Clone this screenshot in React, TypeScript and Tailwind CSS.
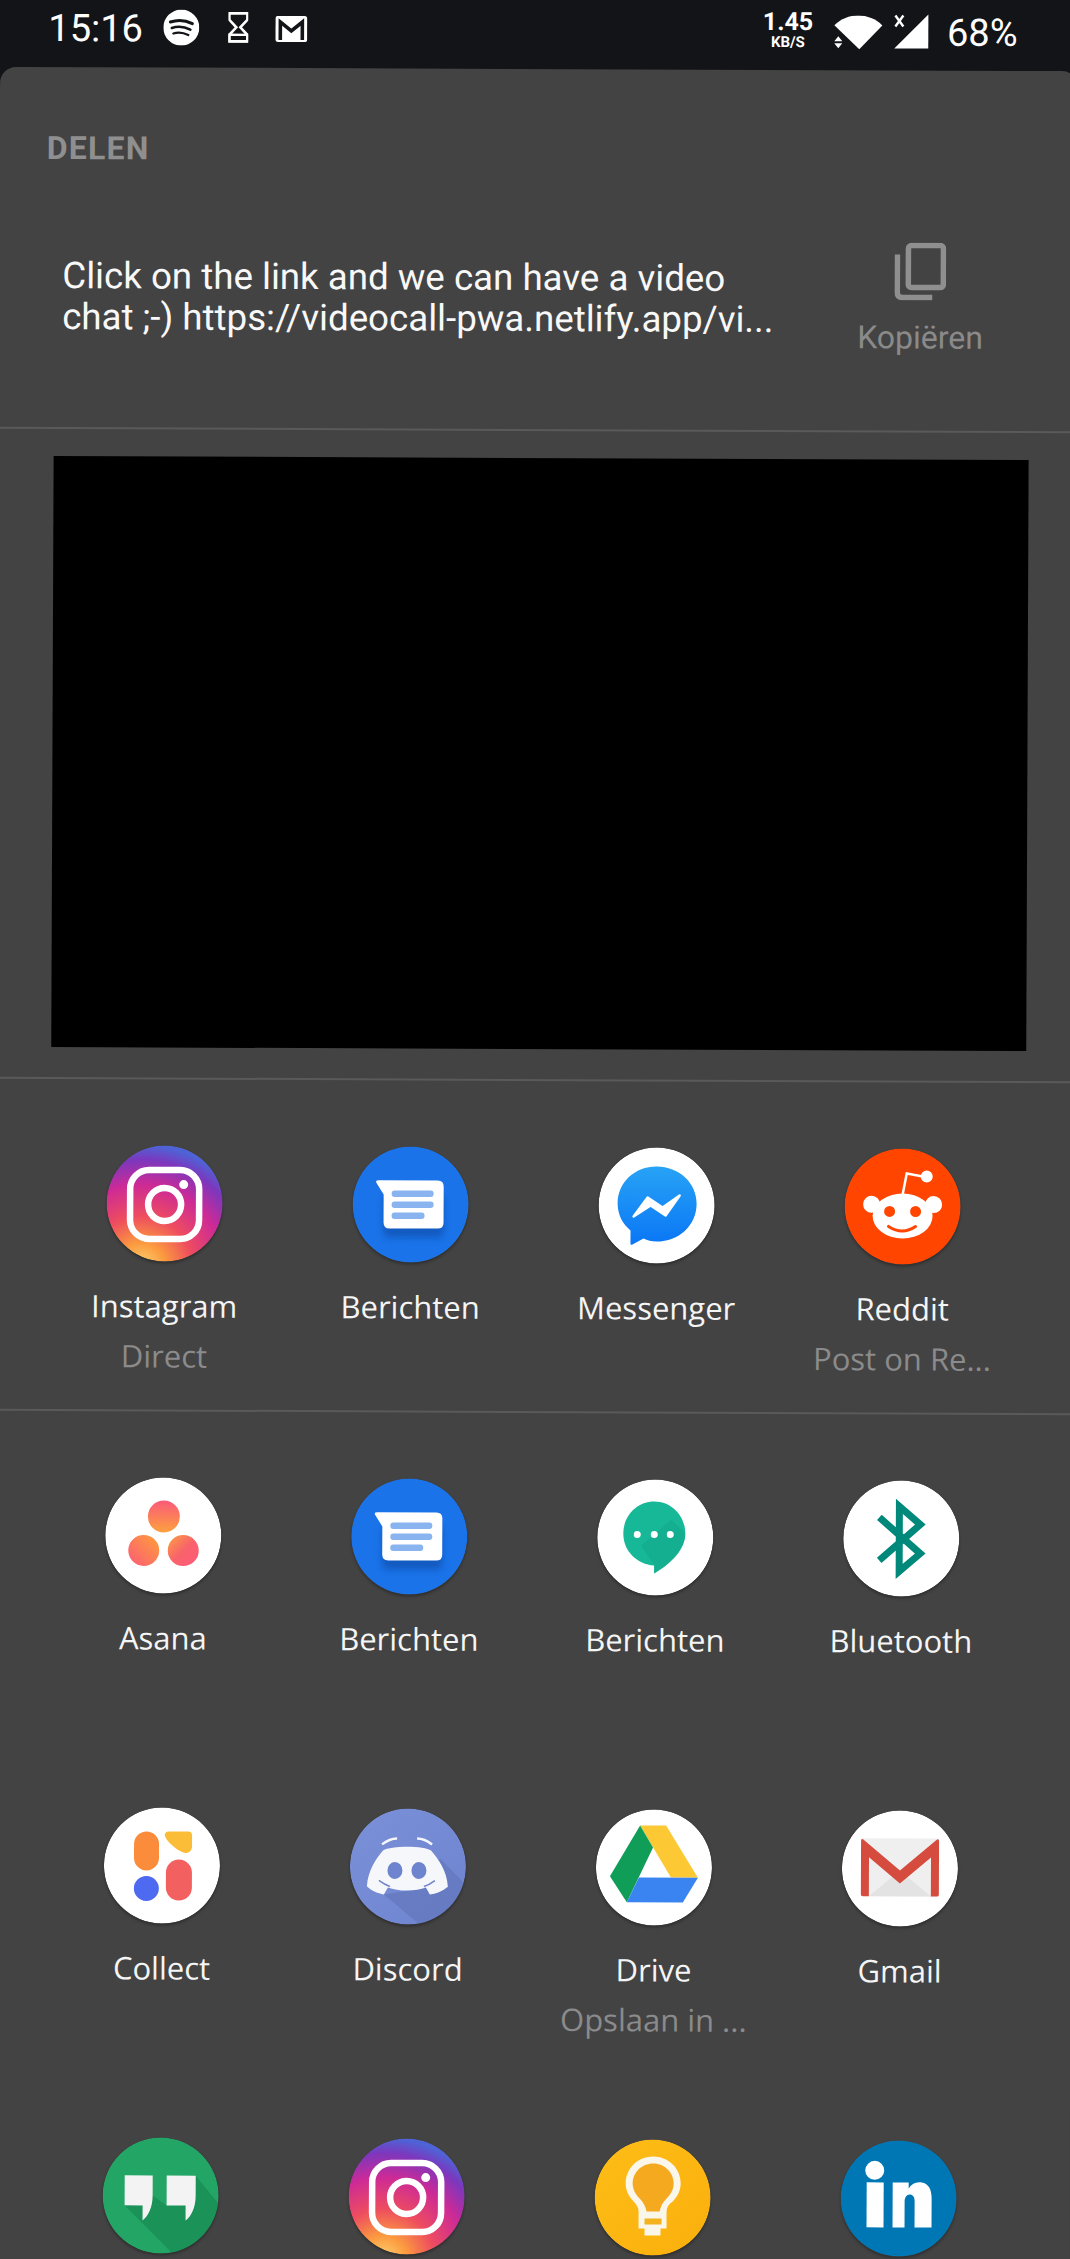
import React from "react";

const S = ({ children }: { children: React.ReactNode }) => (
  <svg viewBox="0 0 116 116" className="h-[116px] w-[116px] rounded-full shadow-[0_2px_3px_rgba(0,0,0,0.3)]">
    {children}
  </svg>
);

const Instagram = () => (
  <S>
    <defs>
      <radialGradient id="ig1" cx="0.3" cy="1.05" r="1.05">
        <stop offset="0" stopColor="#fdd775" />
        <stop offset="0.2" stopColor="#fb9a3f" />
        <stop offset="0.42" stopColor="#ee4d5f" />
        <stop offset="0.68" stopColor="#cd2a96" />
        <stop offset="0.88" stopColor="#7c37bd" />
        <stop offset="1" stopColor="#4f62d6" />
      </radialGradient>
    </defs>
    <circle cx="58" cy="58" r="58" fill="url(#ig1)" />
    <rect x="23.5" y="24.5" width="69" height="69" rx="19" fill="none" stroke="#fff" strokeWidth="6.5" />
    <circle cx="58" cy="59" r="16.5" fill="none" stroke="#fff" strokeWidth="6.5" />
    <circle cx="77" cy="39" r="4.5" fill="#fff" />
  </S>
);

const Messages = () => (
  <S>
    <defs>
      <filter id="mb1" x="-30%" y="-30%" width="160%" height="160%">
        <feGaussianBlur stdDeviation="3" />
      </filter>
    </defs>
    <circle cx="58" cy="58" r="58" fill="#1a73e8" />
    <path d="M36 91 H85 Q91 91 91 85 V50 H31 V85 Q31 91 36 91 Z" fill="#0d47a1" opacity="0.55" filter="url(#mb1)" />
    <path d="M37 82 H85 Q91 82 91 76 V40 Q91 34 85 34 H26 Q22 34 24 37 L31 48 V76 Q31 82 37 82 Z" fill="#fff" />
    <rect x="39" y="44" width="42" height="6.5" rx="3" fill="#8ab4f0" />
    <rect x="39" y="55" width="42" height="6.5" rx="3" fill="#8ab4f0" />
    <rect x="39" y="66" width="33" height="6.5" rx="3" fill="#8ab4f0" />
  </S>
);

const Messenger = () => (
  <S>
    <defs>
      <linearGradient id="ms1" x1="0.5" y1="0" x2="0.5" y2="1">
        <stop offset="0" stopColor="#27a3f6" />
        <stop offset="1" stopColor="#0a76f5" />
      </linearGradient>
    </defs>
    <circle cx="58" cy="58" r="58" fill="#fff" />
    <path d="M58 19 C36 19 19 35 19 56 C19 67 24 77 32 83 V96 Q32 98 34 97 L45 91 C49 93 53 94 58 94 C80 94 98 78 98 56 C98 35 80 19 58 19 Z" fill="url(#ms1)" />
    <path d="M35 69 L49 50 L64 60 L81 48 L67 68 L52 58 Z" fill="#fff" stroke="#fff" strokeWidth="2.5" strokeLinejoin="round" />
  </S>
);

const Reddit = () => (
  <S>
    <circle cx="58" cy="58" r="58" fill="#ff4500" />
    <path d="M58 46 L62 25 L78 28" fill="none" stroke="#fff" strokeWidth="2.5" />
    <circle cx="82" cy="28" r="6" fill="#fff" />
    <circle cx="27" cy="56" r="8.5" fill="#fff" />
    <circle cx="89" cy="56" r="8.5" fill="#fff" />
    <ellipse cx="58" cy="67.5" rx="30" ry="22.5" fill="#fff" />
    <circle cx="45" cy="63" r="5.5" fill="#ff4500" />
    <circle cx="71" cy="63" r="5.5" fill="#ff4500" />
    <path d="M44 78 Q58 87 71 78" fill="none" stroke="#ff4500" strokeWidth="3" strokeLinecap="round" />
  </S>
);

const Asana = () => (
  <S>
    <defs>
      <linearGradient id="as1" x1="0" y1="0" x2="1" y2="1">
        <stop offset="0" stopColor="#ff5a7a" />
        <stop offset="0.5" stopColor="#f9636b" />
        <stop offset="1" stopColor="#fca13f" />
      </linearGradient>
      <linearGradient id="as2" x1="1" y1="0" x2="0" y2="1">
        <stop offset="0" stopColor="#ffa038" />
        <stop offset="1" stopColor="#fb5a78" />
      </linearGradient>
      <linearGradient id="as3" x1="0.5" y1="0" x2="0.5" y2="1">
        <stop offset="0" stopColor="#fb5a78" />
        <stop offset="1" stopColor="#fca13f" />
      </linearGradient>
    </defs>
    <circle cx="58" cy="58" r="58" fill="#fff" />
    <circle cx="58.5" cy="39" r="16" fill="url(#as3)" />
    <circle cx="38.5" cy="73" r="15.5" fill="url(#as2)" />
    <circle cx="78" cy="73" r="15.5" fill="url(#as1)" transform="rotate(180 78 73)" />
  </S>
);

const Hangouts2 = () => (
  <S>
    <circle cx="58" cy="58" r="58" fill="#fff" />
    <path d="M57 22 C40 22 26 36 26 54 C26 72 40 85 57 86 V94 C74 84 88 70 88 54 C88 36 74 22 57 22 Z" fill="#17b897" />
    <path d="M44 66 L74 40 L88 54 C88 70 74 84 57 94 V86 Z" fill="#13a78a" opacity="0.55" />
    <circle cx="40" cy="55" r="3.5" fill="#fff" />
    <circle cx="57" cy="55" r="3.5" fill="#fff" />
    <circle cx="73" cy="55" r="3.5" fill="#fff" />
  </S>
);

const Bluetooth = () => (
  <S>
    <circle cx="58" cy="58" r="58" fill="#fff" />
    <path d="M36 37 L77 73 L56 91 V26 L77 44 L36 80" fill="none" stroke="#00897b" strokeWidth="7" strokeLinejoin="miter" />
  </S>
);

const Collect = () => (
  <S>
    <circle cx="58" cy="58" r="58" fill="#fff" />
    <rect x="30" y="24" width="25" height="39" rx="12.5" fill="#fb8c3c" />
    <path d="M65 24 H84 Q88 24 88 28 V38 C88 45 82 47 77 44 C71 41 63 34 61 29 C60 26 62 24 65 24 Z" fill="#fbbc38" />
    <rect x="62" y="52" width="26" height="41" rx="13" fill="#f2615f" />
    <circle cx="42.5" cy="81" r="12.5" fill="#4d6af0" />
  </S>
);

const Discord = () => (
  <S>
    <defs>
      <linearGradient id="dc1" x1="0" y1="0" x2="1" y2="1">
        <stop offset="0" stopColor="#7a90d8" />
        <stop offset="1" stopColor="#6f84cf" />
      </linearGradient>
    </defs>
    <circle cx="58" cy="58" r="58" fill="url(#dc1)" />
    <path d="M60 82 L90 50 L116 76 L116 116 L70 116 L34 86 Z" fill="#5c70b3" opacity="0.5" />
    <path d="M33 42 C41 37 75 37 81 42 C88 50 97 62 98 78 C92 83 86 85 80 86 L76 79 C66 83 48 83 38 79 L34 86 C28 85 22 83 17 78 C18 62 26 50 33 42 Z" fill="#f6f7fb" />
    <path d="M32 36 C37 32 42 30 47 30 M82 36 C77 32 72 30 67 30" fill="none" stroke="#f6f7fb" strokeWidth="2.5" />
    <path d="M29 72 C33 75 37 77 40 78 M85 72 C81 75 77 77 74 78" fill="none" stroke="#7286cd" strokeWidth="1.6" />
    <ellipse cx="45" cy="62" rx="7.5" ry="8.5" fill="#6f84cf" />
    <ellipse cx="69" cy="62" rx="7.5" ry="8.5" fill="#6f84cf" />
  </S>
);

const Drive = () => (
  <S>
    <circle cx="58" cy="58" r="58" fill="#fff" />
    <path d="M44 16 H70 L102 68 H75 Z" fill="#fcc934" />
    <path d="M44 16 L57 38 L31 93 L14 67 Z" fill="#0f9d58" />
    <path d="M43 68 H102 L87 93 H31 Z" fill="#3a84f1" />
  </S>
);

const Gmail = () => (
  <S>
    <circle cx="58" cy="58" r="58" fill="#fff" />
    <rect x="19" y="28" width="78" height="58" rx="2" fill="#efefef" />
    <path d="M27 86 L58 60 L89 86 Z" fill="#e3e3e3" />
    <path d="M19 31 Q19 28 21 29 L58 60 L95 29 Q97 28 97 31 V84 Q97 86 95 86 H89 V47 L58 73 L27 47 V86 H21 Q19 86 19 84 Z" fill="#d54c3f" />
  </S>
);

const Hangouts = () => (
  <S>
    <circle cx="58" cy="58" r="58" fill="#23a566" />
    <path d="M22 68 L70 116 H116 V66 L93 38 L93 60 L64 68 L50 58 Z" fill="#16864f" opacity="0.6" />
    <path d="M22 38 H50 V58 C50 70 46 78 40 83 V68 H22 Z" fill="#f3f3f3" />
    <path d="M64 38 H93 V58 C93 70 89 78 83 83 V68 H64 Z" fill="#f3f3f3" />
  </S>
);

const Keep = () => (
  <S>
    <defs>
      <linearGradient id="kp1" x1="0" y1="0" x2="1" y2="1">
        <stop offset="0" stopColor="#fdbd17" />
        <stop offset="1" stopColor="#fbaf0c" />
      </linearGradient>
    </defs>
    <circle cx="58" cy="58" r="58" fill="url(#kp1)" />
    <path d="M58.5 17 C43 17 31 29 31 44 C31 52 35 58 39 62 C42 65 44 68 44 72 V89 H50 V96 H66 V89 H72 V72 C72 68 74 65 78 62 C82 58 86 52 86 44 C86 29 74 17 58.5 17 Z" fill="#fbf6ea" />
    <path d="M58.5 24 C47 24 38 33 38 44 C38 50 41 55 45 59 C49 63 51 67 52 72 H65 C66 67 68 63 72 59 C76 55 79 50 79 44 C79 33 70 24 58.5 24 Z" fill="#f4a91e" />
    <rect x="50" y="79" width="17" height="6" fill="#f4b21e" />
  </S>
);

const LinkedIn = () => (
  <S>
    <circle cx="58" cy="58" r="58" fill="#0077b5" />
    <circle cx="34" cy="30" r="9.5" fill="#fff" />
    <rect x="26" y="42" width="17" height="45" fill="#fff" />
    <path d="M52 42 H68 V48 C71 43 76 41 81 42 C88 43 91 49 91 58 V87 H74 V61 C74 56 72 54 69 54 C66 54 64 57 64 61 V87 H52 Z" fill="#fff" />
  </S>
);

const App2 = ({ icon, name, sub }: { icon: React.ReactNode; name?: string; sub?: string }) => (
  <div className="flex flex-col items-center pt-[66px]">
    {icon}
    {name && <div className="mt-[24px] h-[40px] whitespace-nowrap text-[31px] leading-[40px] text-[#f5f5f5]">{name}</div>}
    {sub && <div className="mt-[10px] h-[40px] whitespace-nowrap text-[31px] leading-[40px] text-[#8b8b8b]">{sub}</div>}
  </div>
);

const Divider = () => <div className="h-[2px] w-[1110px] shrink-0 -ml-[20px] bg-[#5a5a5a]" />;

export default function App() {
  return (
    <div className="h-[2259px] w-[1070px] overflow-hidden bg-[#434343] font-['Roboto',sans-serif]">
      <div className="h-[2259px] w-[1070px] origin-center rotate-[0.23deg]">
        <div className="-mx-[20px] -mt-[20px] flex h-[108px] items-start bg-[#131418] pt-[20px] pl-[64px] text-white">
          <div className="mt-[10px] text-[38px] leading-[40px]">15:16</div>
          <svg viewBox="0 0 36 36" className="mt-[11px] ml-[20px] h-[36px] w-[36px]">
            <circle cx="18" cy="18" r="18" fill="#fff" />
            <path d="M7 12.5 C14 10 22 10.5 29 14" fill="none" stroke="#131418" strokeWidth="3" strokeLinecap="round" />
            <path d="M8.5 18.5 C14 16.5 21 17 27 20" fill="none" stroke="#131418" strokeWidth="2.6" strokeLinecap="round" />
            <path d="M10 24 C15 22.5 20 23 25 25.5" fill="none" stroke="#131418" strokeWidth="2.2" strokeLinecap="round" />
          </svg>
          <svg viewBox="0 0 20 31" className="mt-[13px] ml-[29px] h-[31px] w-[20px]">
            <path d="M1 1.5 H19 V8 L12 15.5 L19 23 V29.5 H1 V23 L8 15.5 L1 8 Z" fill="none" stroke="#fff" strokeWidth="2.6" />
            <path d="M1 23 H19 V30 H1 Z" fill="none" stroke="#fff" strokeWidth="2.4" />
          </svg>
          <svg viewBox="0 0 32 26" className="mt-[17px] ml-[27px] h-[26px] w-[32px]">
            <rect width="32" height="26" rx="2.5" fill="#fff" />
            <path d="M5 24 V6 L16 15 L27 6 V24" fill="none" stroke="#131418" strokeWidth="3.6" />
          </svg>
          <div className="ml-[457px] mt-[10px] flex w-[48px] flex-col items-center font-bold">
            <div className="text-[25px] leading-[22px]">1.45</div>
            <div className="mt-[2px] text-[15px] leading-[14px]">KB/S</div>
          </div>
          <svg viewBox="0 0 50 34" className="mt-[14px] ml-[21px] h-[34px] w-[50px]">
            <path d="M1 10 C14 -3 36 -3 49 10 L26 34 Z" fill="#fff" />
            <path d="M5 21 L1 26 H9 Z M1 28 H9 L5 33 Z" fill="#fff" />
          </svg>
          <svg viewBox="0 0 36 36" className="mt-[12px] ml-[10px] h-[36px] w-[36px]">
            <path d="M35 1 V35 H1 Z" fill="#fff" />
            <path d="M2 2 L10 13 M10 2 L2 13" stroke="#fff" strokeWidth="2.4" />
          </svg>
          <div className="mt-[9px] ml-[18px] text-[38px] leading-[44px]">68%</div>
        </div>

        <div className="relative -mt-[19px] -ml-[4px] w-[1078px] rounded-t-[16px] bg-[#434343]">
          <div className="pt-[61px] pl-[47px] text-[32px] leading-[40px] font-bold tracking-[1.2px] text-[#8f8f8f]">DELEN</div>
          <div className="flex h-[259px] items-start pt-[87px]">
            <div className="ml-[63px] w-[783px] whitespace-nowrap text-[36.7px] leading-[41px] text-[#f8f8f8]">
              <div>Click on the link and we can have a video</div>
              <div>chat ;-) https://videocall-pwa.netlify.app/vi...</div>
            </div>
            <div className="-mt-[16px] flex w-[150px] flex-col items-center text-[#8a8a8a]">
              <svg viewBox="0 0 52 58" className="h-[58px] w-[52px]">
                <rect x="14" y="3" width="35" height="42" rx="3" fill="none" stroke="#8f8f8f" strokeWidth="5.5" />
                <path d="M3 12 V50 Q3 55 8 55 H38" fill="none" stroke="#8f8f8f" strokeWidth="5.5" />
              </svg>
              <div className="mt-[17px] text-[32px] leading-[40px]">Kopiëren</div>
            </div>
          </div>
          <Divider />
          <div className="ml-[55px] mt-[27px] h-[591px] w-[975px] bg-black" />
          <div className="mt-[30px]"><Divider /></div>
          <div className="ml-[46px] grid w-[984px] grid-cols-4 auto-rows-[330px] font-['Open_Sans',sans-serif]">
            <App2 icon={<Instagram />} name="Instagram" sub="Direct" />
            <App2 icon={<Messages />} name="Berichten" />
            <App2 icon={<Messenger />} name="Messenger" />
            <App2 icon={<Reddit />} name="Reddit" sub="Post on Re..." />
          </div>
          <Divider />
          <div className="ml-[46px] grid w-[984px] grid-cols-4 auto-rows-[330px] font-['Open_Sans',sans-serif]">
            <App2 icon={<Asana />} name="Asana" />
            <App2 icon={<Messages />} name="Berichten" />
            <App2 icon={<Hangouts2 />} name="Berichten" />
            <App2 icon={<Bluetooth />} name="Bluetooth" />
            <App2 icon={<Collect />} name="Collect" />
            <App2 icon={<Discord />} name="Discord" />
            <App2 icon={<Drive />} name="Drive" sub="Opslaan in ..." />
            <App2 icon={<Gmail />} name="Gmail" />
            <App2 icon={<Hangouts />} />
            <App2 icon={<Instagram />} />
            <App2 icon={<Keep />} />
            <App2 icon={<LinkedIn />} />
          </div>
        </div>
      </div>
    </div>
  );
}
